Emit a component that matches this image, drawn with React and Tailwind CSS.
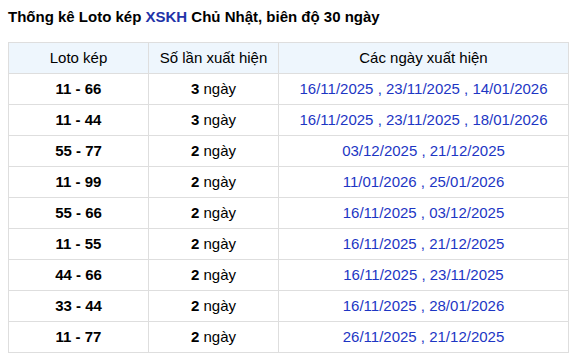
import React from "react";

const rows = [
  ["11 - 66", "3", "16/11/2025 , 23/11/2025 , 14/01/2026"],
  ["11 - 44", "3", "16/11/2025 , 23/11/2025 , 18/01/2026"],
  ["55 - 77", "2", "03/12/2025 , 21/12/2025"],
  ["11 - 99", "2", "11/01/2026 , 25/01/2026"],
  ["55 - 66", "2", "16/11/2025 , 03/12/2025"],
  ["11 - 55", "2", "16/11/2025 , 21/12/2025"],
  ["44 - 66", "2", "16/11/2025 , 23/11/2025"],
  ["33 - 44", "2", "16/11/2025 , 28/01/2026"],
  ["11 - 77", "2", "26/11/2025 , 21/12/2025"],
];

export default function App() {
  return (
    <div className="w-[573px] h-[355px] bg-white overflow-hidden text-black" style={{ fontFamily: '"Liberation Sans", Arial, sans-serif' }}>
      <div className="pl-[8px] pt-[8px] h-[42px] text-[15px] font-bold leading-[18px]">
        Thống kê Loto kép <span className="text-[#2233a8]">XSKH</span> Chủ Nhật, biên độ 30 ngày
      </div>
      <table className="ml-[8px] w-[561px] border-collapse text-[15px]">
        <thead>
          <tr className="bg-[#eef6fd] h-[31px]">
            <th className="border border-[#dedede] font-normal w-[140px] p-0">Loto kép</th>
            <th className="border border-[#dedede] font-normal w-[130px] p-0">Số lần xuất hiện</th>
            <th className="border border-[#dedede] font-normal p-0">Các ngày xuất hiện</th>
          </tr>
        </thead>
        <tbody>
          {rows.map((r, i) => (
            <tr key={i} className="h-[31px]">
              <td className="border border-[#dedede] text-center font-bold p-0">{r[0]}</td>
              <td className="border border-[#dedede] text-center p-0"><b>{r[1]}</b> ngày</td>
              <td className="border border-[#dedede] text-center text-[#1d36c4] p-0">{r[2]}</td>
            </tr>
          ))}
        </tbody>
      </table>
    </div>
  );
}
